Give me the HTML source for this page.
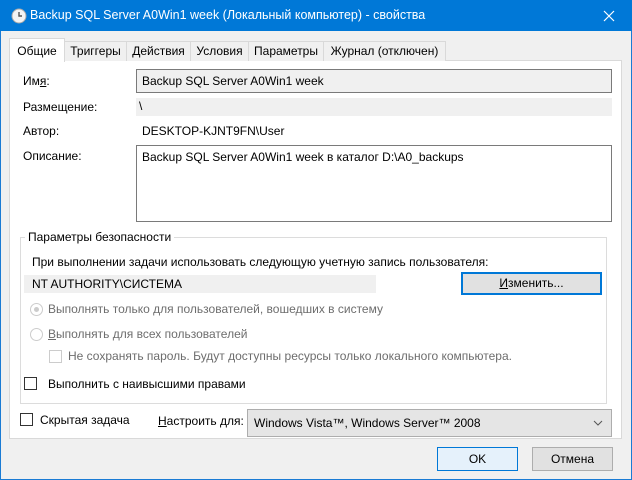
<!DOCTYPE html><html><head><meta charset="utf-8"><style>
*{box-sizing:border-box;margin:0;padding:0}
body{width:632px;height:480px;overflow:hidden;background:#f0f0f0;font-family:"Liberation Sans",sans-serif;font-size:12px;color:#000;position:relative}
.a{position:absolute;white-space:nowrap}
.t{line-height:14px}
.tab{position:absolute;top:41px;height:20px;border:1px solid #d9d9d9;border-bottom:none;background:#f0f0f0;text-align:center;line-height:18px}
.cb{position:absolute;width:13px;height:13px;border:1px solid #333;background:#fff}
.rd{position:absolute;width:13px;height:13px;border:1px solid #ccc;border-radius:50%;background:#fff}
.g{color:#6d6d6d}
</style></head><body>
<div class="a" style="left:0;top:0;width:632px;height:480px;border:1px solid #1a7bd4"></div>
<div class="a" style="left:0;top:0;width:632px;height:31px;background:#0078d7"></div>
<svg class="a" style="left:11px;top:8px" width="16" height="16"><circle cx="8" cy="8" r="7" fill="#f4f4f4" stroke="#aaa"/><path d="M8 4V8H11" stroke="#555" stroke-width="1.4" fill="none"/></svg>
<div class="a" style="left:30px;top:8px;color:#fff;font-size:12.5px">Backup SQL Server A0Win1 week (Локальный компьютер) - свойства</div>
<svg class="a" style="left:603px;top:10px" width="12" height="12"><path d="M1 1L11 11M11 1L1 11" stroke="#fff" stroke-width="1.2"/></svg>

<div class="a" style="left:9px;top:60px;width:613px;height:379px;background:#fff;border:1px solid #d9d9d9"></div>
<div class="tab" style="left:64px;width:63px">Триггеры</div>
<div class="tab" style="left:126px;width:65px">Действия</div>
<div class="tab" style="left:190px;width:59px">Условия</div>
<div class="tab" style="left:248px;width:76px">Параметры</div>
<div class="tab" style="left:323px;width:123px">Журнал (отключен)</div>
<div class="tab" style="left:9px;top:38px;width:56px;height:24px;background:#fff;line-height:24px">Общие</div>

<div class="a t" style="left:23px;top:74px">Им<u>я</u>:</div>
<div class="a" style="left:136px;top:69px;width:476px;height:24px;background:#f0f0f0;border:1px solid #7a7a7a;padding:4px 5px">Backup SQL Server A0Win1 week</div>
<div class="a t" style="left:23px;top:100px">Размещение:</div>
<div class="a" style="left:136px;top:98px;width:476px;height:18px;background:#f0f0f0;padding:1px 3px">\</div>
<div class="a t" style="left:23px;top:124px">Автор:</div>
<div class="a t" style="left:142px;top:124px">DESKTOP-KJNT9FN\User</div>
<div class="a t" style="left:23px;top:149px">Описание:</div>
<div class="a" style="left:136px;top:145px;width:476px;height:77px;background:#fff;border:1px solid #7a7a7a;padding:4px 5px">Backup SQL Server A0Win1 week в каталог D:\A0_backups</div>

<div class="a" style="left:20px;top:237px;width:587px;height:167px;border:1px solid #dcdcdc"></div>
<div class="a t" style="left:25px;top:230px;background:#fff;padding:0 3px">Параметры безопасности</div>
<div class="a t" style="left:32px;top:255px">При выполнении задачи использовать следующую учетную запись пользователя:</div>
<div class="a" style="left:24px;top:275px;width:352px;height:18px;background:#f0f0f0;padding:2px 8px">NT AUTHORITY\СИСТЕМА</div>
<div class="a" style="left:461px;top:272px;width:141px;height:23px;background:#e1e1e1;border:2px solid #0078d7;text-align:center;line-height:19px"><u>И</u>зменить...</div>
<div class="rd" style="left:30px;top:303px"></div><div class="a" style="left:34px;top:307px;width:5px;height:5px;border-radius:50%;background:#ccc"></div>
<div class="a t g" style="left:48px;top:302px">Выполнять только для пользователей, вошедших в систему</div>
<div class="rd" style="left:30px;top:328px"></div>
<div class="a t g" style="left:48px;top:327px"><u>В</u>ыполнять для всех пользователей</div>
<div class="cb" style="left:49px;top:350px;border-color:#ccc"></div>
<div class="a t g" style="left:68px;top:349px">Не сохранять пароль. Будут доступны ресурсы только локального компьютера.</div>
<div class="cb" style="left:24px;top:377px"></div>
<div class="a t" style="left:48px;top:377px">Выполнить с наивысшими правами</div>

<div class="cb" style="left:20px;top:413px"></div>
<div class="a t" style="left:40px;top:413px">Скрытая задача</div>
<div class="a t" style="left:158px;top:414px"><u>Н</u>астроить для:</div>
<div class="a" style="left:247px;top:409px;width:365px;height:28px;background:#e5e5e5;border:1px solid #adadad;padding:6px 6px">Windows Vista™, Windows Server™ 2008</div>
<svg class="a" style="left:593px;top:419px" width="10" height="8"><path d="M1 2L5 6L9 2" stroke="#555" fill="none"/></svg>

<div class="a" style="left:437px;top:447px;width:81px;height:24px;background:#e5f1fb;border:1px solid #0078d7;text-align:center;line-height:22px">OK</div>
<div class="a" style="left:532px;top:447px;width:81px;height:24px;background:#e1e1e1;border:1px solid #adadad;text-align:center;line-height:22px">Отмена</div>
</body></html>
